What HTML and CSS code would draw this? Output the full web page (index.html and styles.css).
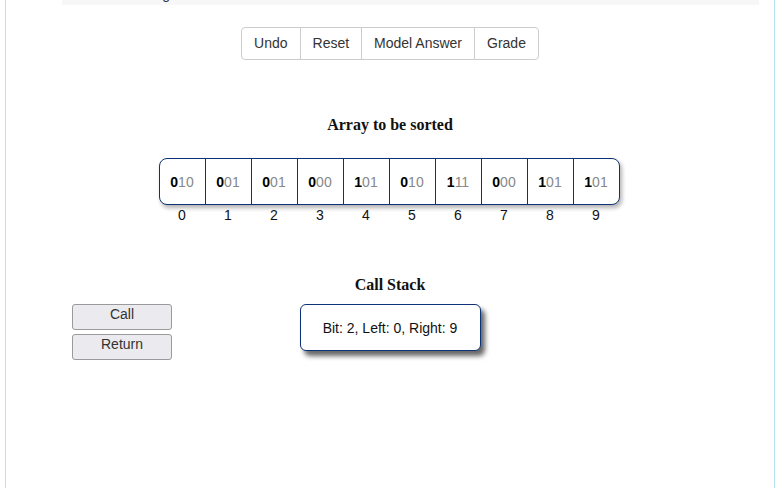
FILE: index.html
```html
<!DOCTYPE html>
<html>
<head>
<meta charset="utf-8">
<link rel="stylesheet" href="styles.css">
</head>
<body>
<div class="frame">
  <div class="topbar"><p class="topbar-text">Radix Sorting</p></div>
  <div class="toolbar">
    <div class="btn-group">
      <button class="btn">Undo</button>
      <button class="btn">Reset</button>
      <button class="btn">Model Answer</button>
      <button class="btn">Grade</button>
    </div>
  </div>
  <h2 class="title array-title">Array to be sorted</h2>
  <div class="array-wrap">
    <div class="array">
      <div class="cell"><b>0</b><span>10</span></div>
      <div class="cell"><b>0</b><span>01</span></div>
      <div class="cell"><b>0</b><span>01</span></div>
      <div class="cell"><b>0</b><span>00</span></div>
      <div class="cell"><b>1</b><span>01</span></div>
      <div class="cell"><b>0</b><span>10</span></div>
      <div class="cell"><b>1</b><span>11</span></div>
      <div class="cell"><b>0</b><span>00</span></div>
      <div class="cell"><b>1</b><span>01</span></div>
      <div class="cell"><b>1</b><span>01</span></div>
    </div>
    <div class="indices">
      <div>0</div><div>1</div><div>2</div><div>3</div><div>4</div>
      <div>5</div><div>6</div><div>7</div><div>8</div><div>9</div>
    </div>
  </div>
  <div class="stack-area">
    <h2 class="title stack-title">Call Stack</h2>
    <div class="controls">
      <button class="ctrl">Call</button>
      <button class="ctrl">Return</button>
    </div>
    <div class="stack">
      <div class="frame-box">Bit: 2, Left: 0, Right: 9</div>
    </div>
  </div>
</div>
</body>
</html>
```
FILE: styles.css
```css
html, body {
  margin: 0;
  padding: 0;
  background: #fff;
  height: 100%;
}
body {
  font-family: "Liberation Sans", Arial, sans-serif;
  font-size: 14px;
  color: #333;
  overflow: hidden;
}
.frame {
  margin-left: 5px;
  width: 768px;
  min-height: 100%;
  border-left: 1px solid #b5e2ee;
  border-right: 1px solid #b5e2ee;
  display: flex;
  flex-direction: column;
}
.topbar {
  margin-left: 56px;
  width: 697px;
  height: 5px;
  background: #f7f7f7;
  overflow: hidden;
}
.topbar-text {
  margin: -14px 0 0 24px;
  font-size: 14px;
  line-height: 16px;
  color: #333;
}
.toolbar {
  display: flex;
  justify-content: center;
  margin-top: 22px;
}
.btn-group {
  display: flex;
}
.btn {
  font-family: "Liberation Sans", Arial, sans-serif;
  font-size: 14px;
  color: #333;
  background: #fff;
  border: 1px solid #ccc;
  margin-left: -1px;
  padding: 6px 12px;
  line-height: 19px;
  border-radius: 0;
}
.btn:first-child {
  margin-left: 0;
  border-radius: 4px 0 0 4px;
}
.btn:last-child {
  border-radius: 0 4px 4px 0;
}
.title {
  font-family: "Liberation Serif", "Times New Roman", serif;
  font-weight: bold;
  font-size: 16px;
  line-height: 20px;
  color: #111;
  text-align: center;
  margin: 0;
}
.array-title {
  margin-top: 55px;
}
.array-wrap {
  display: flex;
  flex-direction: column;
  align-items: center;
  margin-top: 23px;
  margin-right: 2px;
}
.array {
  display: flex;
  border: 1px solid #0d3275;
  border-radius: 8px;
  overflow: hidden;
  box-shadow: 2px 3px 4px rgba(0, 0, 0, 0.3);
  background: #fff;
}
.cell {
  width: 45px;
  height: 45px;
  display: flex;
  align-items: center;
  justify-content: center;
  border-left: 1px solid #0d3275;
  font-size: 14px;
}
.cell:first-child {
  border-left: none;
}
.cell b {
  color: #000;
  font-weight: bold;
}
.cell span {
  color: #888;
}
.indices {
  display: flex;
  margin-top: 2px;
}
.indices div {
  width: 46px;
  text-align: center;
  font-size: 14px;
  line-height: 16px;
  color: #111;
}
.stack-area {
  display: grid;
  grid-template-columns: 1fr auto 1fr;
  margin-top: 52px;
}
.stack-title {
  grid-column: 2;
  grid-row: 1;
  margin-bottom: 9px;
}
.controls {
  grid-column: 1;
  grid-row: 2;
  display: flex;
  flex-direction: column;
  gap: 4px;
  padding-left: 66px;
}
.ctrl {
  width: 100px;
  height: 26px;
  font-family: "Liberation Sans", Arial, sans-serif;
  font-size: 14px;
  line-height: 16px;
  color: #333;
  background: #ebebef;
  border: 1px solid #9a9a9a;
  border-radius: 3px;
  padding: 0 0 6px;
}
.stack {
  grid-column: 2;
  grid-row: 2;
}
.frame-box {
  width: 179px;
  height: 45px;
  border: 1px solid #0d3275;
  border-radius: 6px;
  display: flex;
  align-items: center;
  justify-content: center;
  font-size: 14px;
  color: #111;
  box-shadow: 4px 5px 5px rgba(0, 0, 0, 0.6);
  background: #fff;
}
```
